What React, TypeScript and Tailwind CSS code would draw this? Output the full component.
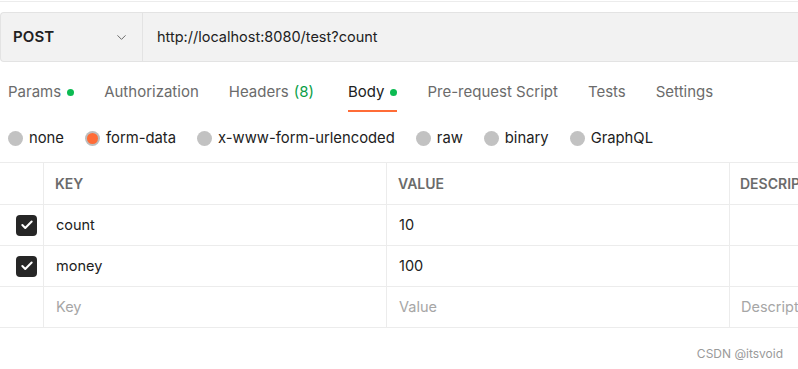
import { ChevronDown, Check } from "lucide-react";

const tabs = [
  { label: "Params", dot: true },
  { label: "Authorization" },
  { label: "Headers", count: "(8)" },
  { label: "Body", dot: true, active: true },
  { label: "Pre-request Script" },
  { label: "Tests" },
  { label: "Settings" },
];

const bodyTypes = [
  { label: "none" },
  { label: "form-data", selected: true },
  { label: "x-www-form-urlencoded" },
  { label: "raw" },
  { label: "binary" },
  { label: "GraphQL" },
];

const rows = [
  { key: "count", value: "10" },
  { key: "money", value: "100" },
];

export default function App() {
  return (
    <div
      className="relative h-[369px] w-[798px] overflow-hidden bg-white text-[#212121]"
      style={{ fontFamily: "Inter, 'Noto Sans', sans-serif" }}
    >
      {/* top rule */}
      <div className="mt-[1px] h-[1px] bg-[#ececec]" />

      {/* Request bar */}
      <div className="mt-[10px] flex h-[50px] rounded-l-[4px] border-y border-l border-[#e3e3e3] bg-[#f2f2f2]">
        <div className="flex w-[142px] shrink-0 items-center justify-between border-r border-[#e3e3e3] pl-[12px] pr-[13px]">
          <span className="text-[15px] font-semibold tracking-[0.1px]">POST</span>
          <ChevronDown className="h-[15px] w-[15px] text-[#6b6b6b]" strokeWidth={1.6} />
        </div>
        <div className="flex items-center pl-[14px] text-[14.5px]">http://localhost:8080/test?count</div>
      </div>

      {/* Tabs */}
      <div className="mt-[19px] flex h-[31px] pl-[8px] text-[15px]">
        {tabs.map((t) => (
          <div
            key={t.label}
            className={
              "relative flex h-full shrink-0 items-start gap-[6px] " +
              (t.count ? "mr-[34px] " : "mr-[30px] ") +
              (t.active ? "text-[#212121]" : "text-[#6b6b6b]")
            }
          >
            <span>{t.label}</span>
            {t.count && <span className="-ml-[1px] text-[#0b9e47]">{t.count}</span>}
            {t.dot && <span className="mt-[8px] h-[7px] w-[7px] rounded-full bg-[#0cbb52]" />}
            {t.active && (
              <span className="absolute bottom-0 left-0 right-0 h-[2px] bg-[#ff6c37]" />
            )}
          </div>
        ))}
      </div>

      {/* Body types */}
      <div className="mt-[16px] flex h-[20px] items-center pl-[8px] text-[14.8px]">
        {bodyTypes.map((b) => (
          <div key={b.label} className="mr-[21px] flex shrink-0 items-center gap-[6px]">
            {b.selected ? (
              <span className="flex h-[15px] w-[15px] items-center justify-center rounded-full bg-[#bdbdbd]">
                <span className="h-[11px] w-[11px] rounded-full bg-[#ff6c37]" />
              </span>
            ) : (
              <span className="h-[15px] w-[15px] rounded-full bg-[#c2c2c2]" />
            )}
            <span>{b.label}</span>
          </div>
        ))}
      </div>

      {/* Table */}
      <div className="mt-[14px] border-y border-[#ececec] text-[14.5px]">
        <div className="flex h-[42px] border-b border-[#ececec] text-[14px] font-semibold text-[#6b6b6b]">
          <div className="w-[44px] shrink-0 border-r border-[#ececec]" />
          <div className="flex w-[343px] shrink-0 items-center border-r border-[#ececec] pl-[11px]">KEY</div>
          <div className="flex w-[343px] shrink-0 items-center border-r border-[#ececec] pl-[11px]">VALUE</div>
          <div className="flex flex-1 items-center overflow-hidden whitespace-nowrap pl-[10px]">DESCRIPTION</div>
        </div>
        {rows.map((r) => (
          <div key={r.key} className="flex h-[41px] border-b border-[#ececec]">
            <div className="flex w-[44px] shrink-0 items-center justify-end border-r border-[#ececec] pr-[6px]">
              <span className="flex h-[21px] w-[21px] items-center justify-center rounded-[4px] bg-[#262626]">
                <Check className="h-[14px] w-[14px] text-white" strokeWidth={3.5} />
              </span>
            </div>
            <div className="flex w-[343px] shrink-0 items-center border-r border-[#ececec] pl-[12px]">{r.key}</div>
            <div className="flex w-[343px] shrink-0 items-center border-r border-[#ececec] pl-[12px]">{r.value}</div>
            <div className="flex-1" />
          </div>
        ))}
        <div className="flex h-[40px] text-[#a6a6a6]">
          <div className="w-[44px] shrink-0 border-r border-[#ececec]" />
          <div className="flex w-[343px] shrink-0 items-center border-r border-[#ececec] pl-[12px]">Key</div>
          <div className="flex w-[343px] shrink-0 items-center border-r border-[#ececec] pl-[12px]">Value</div>
          <div className="flex flex-1 items-center overflow-hidden whitespace-nowrap pl-[11px]">Description</div>
        </div>
      </div>

      {/* watermark */}
      <div className="flex justify-end pr-[15px] pt-[17px] text-[12px] text-[#9a9a9a]">CSDN @itsvoid</div>
    </div>
  );
}
